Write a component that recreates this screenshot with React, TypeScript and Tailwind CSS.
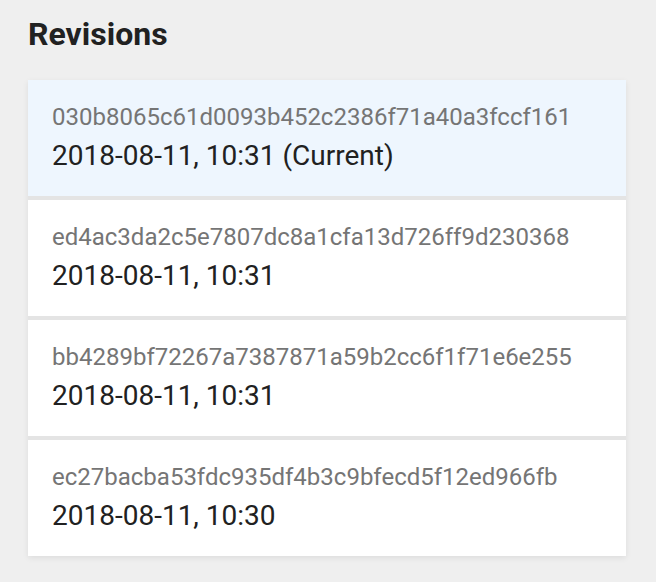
const revisions = [
  { hash: "030b8065c61d0093b452c2386f71a40a3fccf161", date: "2018-08-11, 10:31", current: true },
  { hash: "ed4ac3da2c5e7807dc8a1cfa13d726ff9d230368", date: "2018-08-11, 10:31" },
  { hash: "bb4289bf72267a7387871a59b2cc6f1f71e6e255", date: "2018-08-11, 10:31" },
  { hash: "ec27bacba53fdc935df4b3c9bfecd5f12ed966fb", date: "2018-08-11, 10:30" },
];

const App = () => {
  return (
    <div className="min-h-[582px] bg-[#efefef] px-7 pt-[14px] font-['Roboto',sans-serif]">
      {/* Header */}
      <h1 className="text-[32px] leading-[40px] font-bold text-[#212121] mb-[26px]">Revisions</h1>

      {/* Revision list */}
      <div className="w-[598px] flex flex-col gap-1 bg-[#e4e4e4] shadow-[0_2px_6px_rgba(0,0,0,0.08)]">
        {revisions.map((rev) => (
          <div
            key={rev.hash}
            className={`px-6 py-5 ${rev.current ? "bg-[#eef6fe]" : "bg-white"}`}
          >
            <div className="text-[24px] leading-[35px] text-[#757575]">{rev.hash}</div>
            <div className="text-[28px] leading-[41px] text-[#212121]">
              {rev.date}
              {rev.current && " (Current)"}
            </div>
          </div>
        ))}
      </div>
    </div>
  );
};

export default App;
